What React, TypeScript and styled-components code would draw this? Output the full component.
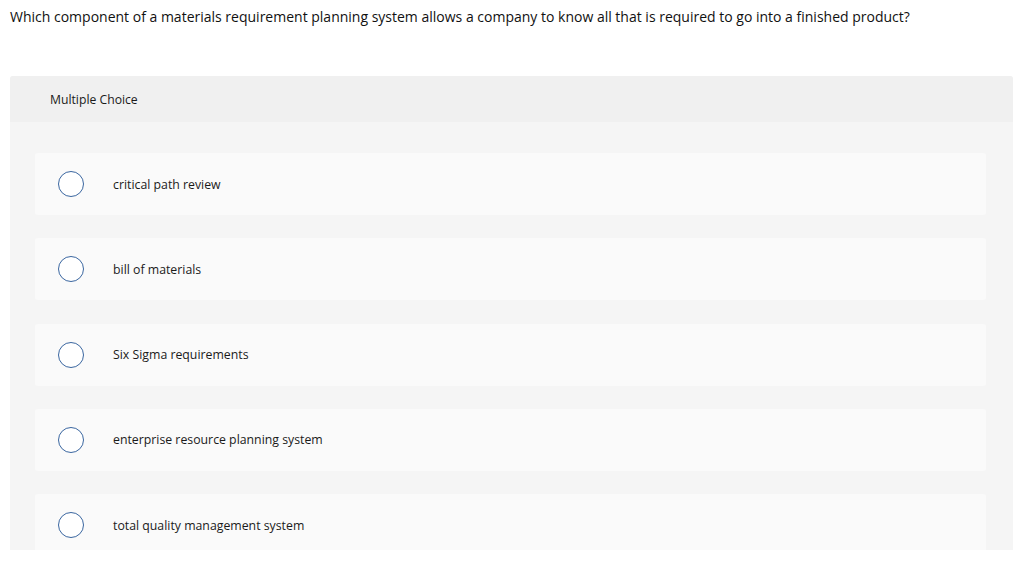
import styled, { createGlobalStyle } from "styled-components";

const GlobalStyle = createGlobalStyle`
  html, body {
    margin: 0;
    padding: 0;
    background: #ffffff;
    font-family: "Open Sans", "Liberation Sans", sans-serif;
    color: #222222;
  }
`;

const Page = styled.div`
  width: 1024px;
  height: 564px;
  overflow: hidden;
  box-sizing: border-box;
  padding: 8px 11px 0 10px;
`;

const Question = styled.p`
  margin: 0;
  font-size: 14px;
  line-height: 18px;
  color: #111111;
`;

const Panel = styled.div`
  margin-top: 50px;
  background: #f5f5f5;
  border-radius: 3px 3px 0 0;
  height: 474px;
  overflow: hidden;
`;

const PanelHeader = styled.div`
  height: 46px;
  background: #f0f0f0;
  display: flex;
  align-items: center;
  padding-left: 40px;
  font-size: 12.2px;
  color: #1a1a1a;
`;

const Options = styled.div`
  display: flex;
  flex-direction: column;
  gap: 23.3px;
  padding: 31px 27px 0 25px;
`;

const Option = styled.label`
  height: 62px;
  flex-shrink: 0;
  background: #fafafa;
  border-radius: 3px;
  display: flex;
  align-items: center;
  padding-left: 23px;
  font-size: 12.3px;
  color: #1a1a1a;
  cursor: pointer;
`;

const Radio = styled.span`
  width: 24px;
  height: 24px;
  border-radius: 50%;
  border: 1px solid #3a66a0;
  background: #ffffff;
  margin-right: 29px;
  flex-shrink: 0;
`;

const choices = [
  "critical path review",
  "bill of materials",
  "Six Sigma requirements",
  "enterprise resource planning system",
  "total quality management system",
];

export default function App() {
  return (
    <>
      <GlobalStyle />
      <Page>
        <Question>
          Which component of a materials requirement planning system allows a
          company to know all that is required to go into a finished product?
        </Question>
        <Panel>
          <PanelHeader>Multiple Choice</PanelHeader>
          <Options>
            {choices.map((c) => (
              <Option key={c}>
                <Radio />
                {c}
              </Option>
            ))}
          </Options>
        </Panel>
      </Page>
    </>
  );
}
